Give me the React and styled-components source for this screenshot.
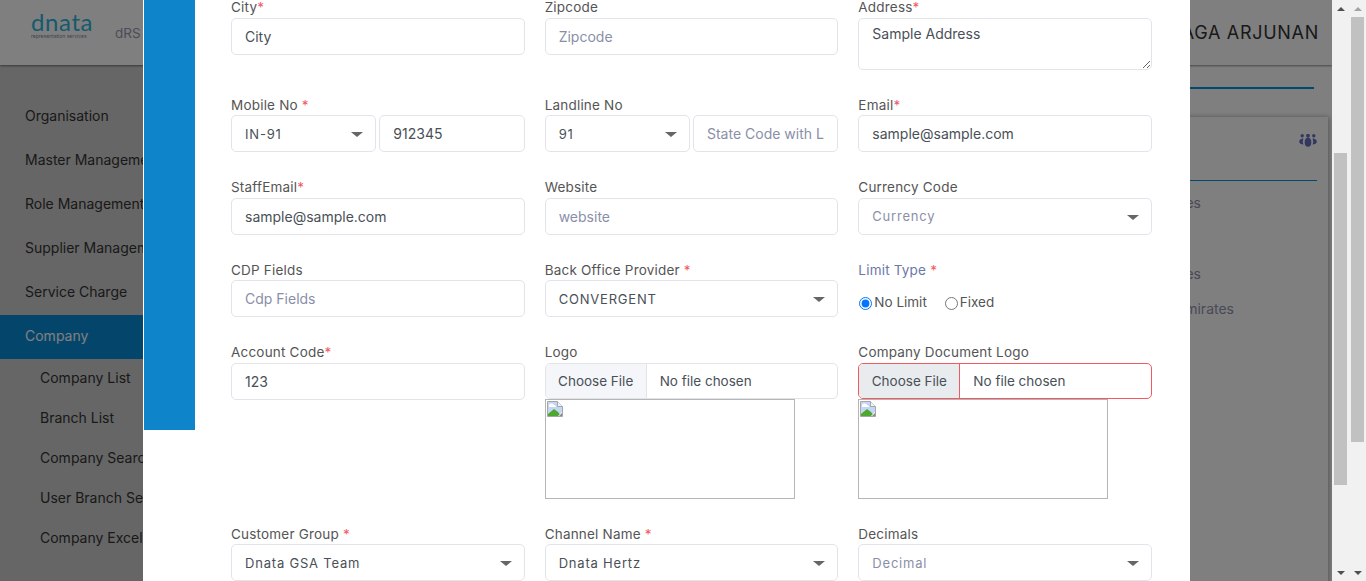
import React from "react"
import styled, { createGlobalStyle } from "styled-components"

const FONT = "Inter, 'Noto Sans', sans-serif"

const GlobalStyle = createGlobalStyle`
    html, body {
        margin: 0;
        height: 100%;
        overflow: hidden;
        font-family: ${FONT};
    }
    * {
        box-sizing: border-box;
    }
`

const sideItems = ["Organisation", "Master Management", "Role Management", "Supplier Management", "Service Charge"]
const subItems = ["Company List", "Branch List", "Company Search", "User Branch Search", "Company Excel Upload"]

function SelectField({ value, muted }) {
    return (
        <SelectWrap>
            <Select defaultValue={value} $muted={muted}>
                <option>{value}</option>
            </Select>
            <CaretMark />
        </SelectWrap>
    )
}

function BrokenImage() {
    return (
        <svg width="16" height="16" viewBox="0 0 16 16">
            <path d="M.5.5h10l5 5v10h-15z" fill="#c3d6f5" stroke="#a6a6a6" />
            <path d="M2 4c1-2 4-2 5 0 1 0 2 1 2 2H2z" fill="#fff" />
            <path d="M1 15v-2l6-5 4 3 3 4z" fill="#4ea72e" />
            <path d="M10.500.5v5h5" fill="#f4f4f4" stroke="#a6a6a6" />
            <path d="M11 15l4-4v4z" fill="#fff" />
            <path d="M12 15l3-3v3z" fill="#8a8a8a" />
        </svg>
    )
}

function TeamIcon() {
    return (
        <svg width="18" height="13" viewBox="0 0 18 13" fill="#666ec0">
            <circle cx="3.200" cy="1.800" r="1.700" />
            <circle cx="9" cy="1.800" r="1.900" />
            <circle cx="14.800" cy="1.800" r="1.700" />
            <ellipse cx="9" cy="8.300" rx="3.300" ry="4.500" />
            <path d="M4.600 4.500C2 4.300.2 5.800.2 7.500s1.800 3 4.200 3c-.8-2-.8-4 .2-6z" />
            <path d="M13.400 4.500c2.600-.2 4.400 1.300 4.400 3s-1.800 3-4.200 3c.8-2 .8-4-.2-6z" />
        </svg>
    )
}

function FileField({ error }) {
    return (
        <>
            <FileInput type="file" $error={error} />
            <Preview>
                <BrokenImage />
            </Preview>
        </>
    )
}

function Field({ label, star, tinted, children }) {
    return (
        <FieldBox>
            <Label $tinted={tinted}>
                {label}
                {star && <Star>{star}</Star>}
            </Label>
            {children}
        </FieldBox>
    )
}

export default function App() {
    return (
        <Screen>
            <GlobalStyle />
            <Page>
                <Header>
                    <Logo>
                        <LogoName>dnata</LogoName>
                        <LogoSub>representation services</LogoSub>
                    </Logo>
                    <AppName>dRS</AppName>
                    <UserName>NAGA ARJUNAN</UserName>
                </Header>
                <Body>
                    <Sidebar>
                        {sideItems.map((item) => <SideItem key={item}>{item}</SideItem>)}
                        <SideItem $active>Company</SideItem>
                        {subItems.map((item) => <SubItem key={item}>{item}</SubItem>)}
                    </Sidebar>
                    <Main>
                        <TopRule />
                        <Card>
                            <CardHead>
                                <TeamIcon />
                            </CardHead>
                            <CardRule />
                            <CardText $top={12} $end={127}>Company Branches</CardText>
                            <CardText $top={51} $end={127}>Company Branches</CardText>
                            <CardText $top={15} $end={94}>United Arab Emirates</CardText>
                        </Card>
                    </Main>
                </Body>
                <Backdrop />
                <Modal>
                    <BlueStrip />
                    <Form>
                        <Field label="City" star="*"><Input defaultValue="City" /></Field>
                        <Field label="Zipcode"><Input placeholder="Zipcode" /></Field>
                        <Field label="Address" star="*"><TextArea defaultValue="Sample Address" /></Field>

                        <Field label="Mobile No" star=" *">
                            <Pair>
                                <SelectField value="IN-91" />
                                <Input defaultValue="912345" />
                            </Pair>
                        </Field>
                        <Field label="Landline No">
                            <Pair>
                                <SelectField value="91" />
                                <Input placeholder="State Code with Lc" />
                            </Pair>
                        </Field>
                        <Field label="Email" star="*"><Input defaultValue="sample@sample.com" /></Field>

                        <Field label="StaffEmail" star="*"><Input defaultValue="sample@sample.com" /></Field>
                        <Field label="Website"><Input placeholder="website" /></Field>
                        <Field label="Currency Code"><SelectField value="Currency" muted /></Field>

                        <Field label="CDP Fields"><Input placeholder="Cdp Fields" /></Field>
                        <Field label="Back Office Provider" star=" *"><SelectField value="CONVERGENT" /></Field>
                        <Field label="Limit Type" star=" *" tinted>
                            <RadioRow>
                                <RadioLabel><input type="radio" name="limit" defaultChecked />No Limit</RadioLabel>
                                <RadioLabel><input type="radio" name="limit" />Fixed</RadioLabel>
                            </RadioRow>
                        </Field>

                        <Field label="Account Code" star="*"><Input defaultValue="123" /></Field>
                        <Field label="Logo"><FileField /></Field>
                        <Field label="Company Document Logo"><FileField error /></Field>

                        <Field label="Customer Group" star=" *"><SelectField value="Dnata GSA Team" /></Field>
                        <Field label="Channel Name" star=" *"><SelectField value="Dnata Hertz" /></Field>
                        <Field label="Decimals"><SelectField value="Decimal" muted /></Field>
                    </Form>
                </Modal>
            </Page>
            <ScrollTrack>
                <Arrow />
                <Thumb $top={136} $height={332} />
                <Arrow $down />
            </ScrollTrack>
            <ScrollTrack>
                <Arrow $disabled />
                <Thumb $top={0} $height={425} />
                <Arrow $down />
            </ScrollTrack>
        </Screen>
    )
}

const Screen = styled.div`
    display: flex;
    width: 1366px;
    height: 581px;
    overflow: hidden;
`
const Page = styled.div`
    position: relative;
    width: 1332px;
    height: 581px;
    overflow: hidden;
    display: flex;
    flex-direction: column;
    background-color: #fff;
`
const Header = styled.header`
    height: 65px;
    flex-shrink: 0;
    display: flex;
    align-items: center;
    padding: 0 13px 0 31px;
    background-color: #fff;
    box-shadow: 0 1px 2px rgba(0, 0, 0, 0.45);
    position: relative;
`
const Logo = styled.div`
    display: flex;
    flex-direction: column;
    width: 58px;
    margin-bottom: 13px;
`
const LogoName = styled.span`
    font-family: 'Lato', sans-serif;
    font-size: 24px;
    line-height: 18px;
    letter-spacing: 0.6px;
    color: #2cb4dd;
`
const LogoSub = styled.span`
    margin-top: 2px;
    font-size: 5px;
    line-height: 6px;
    white-space: nowrap;
    color: #7a8aa0;
`
const AppName = styled.span`
    margin-left: 26px;
    font-size: 13.5px;
    color: #9a9ab4;
`
const UserName = styled.span`
    margin-left: auto;
    font-size: 18px;
    letter-spacing: 0.7px;
    color: #333;
`
const Body = styled.div`
    flex: 1;
    display: flex;
    min-height: 0;
`
const Sidebar = styled.nav`
    width: 220px;
    flex-shrink: 0;
    padding-top: 30px;
    background-color: #ccc;
`
const SideItem = styled.div`
    height: 44px;
    display: flex;
    align-items: center;
    padding: 0 0 3px 25px;
    font-size: 14px;
    white-space: nowrap;
    color: ${(props) => (props.$active ? "#fff" : "#333")};
    background-color: ${(props) => (props.$active ? "#098cd6" : "transparent")};
`
const SubItem = styled.div`
    height: 40px;
    display: flex;
    align-items: center;
    padding: 0 0 3px 40px;
    font-size: 14px;
    white-space: nowrap;
    color: #333;
`
const Main = styled.main`
    flex: 1;
    padding: 22px 4px 0 20px;
`
const TopRule = styled.div`
    height: 2px;
    margin-right: 14px;
    background-color: #0094e0;
`
const Card = styled.section`
    height: 600px;
    margin-top: 28px;
    padding: 0 11px;
    box-shadow: 1px 0 5px rgba(0, 0, 0, 0.35);
`
const CardHead = styled.div`
    height: 63px;
    padding-top: 17px;
    display: flex;
    justify-content: flex-end;
`
const CardRule = styled.div`
    height: 1px;
    background-color: #0094e0;
`
const CardText = styled.div`
    margin-top: ${(props) => props.$top}px;
    padding-right: ${(props) => props.$end - 11}px;
    line-height: 20px;
    text-align: right;
    font-size: 14px;
    color: #9393b0;
`
const Backdrop = styled.div`
    position: absolute;
    inset: 0;
    background-color: rgba(0, 0, 0, 0.5);
`
const Modal = styled.div`
    position: absolute;
    top: 0;
    left: 143px;
    width: 1047px;
    height: 581px;
    display: flex;
    align-items: flex-start;
    padding-left: 1px;
    background-color: #fff;
`
const BlueStrip = styled.div`
    width: 51px;
    height: 430px;
    flex-shrink: 0;
    background-color: #0e84ca;
`
const Form = styled.form`
    flex: 1;
    margin-top: -1.6px;
    padding: 0 38px 0 36px;
    display: grid;
    grid-template-columns: repeat(3, minmax(0, 1fr));
    column-gap: 20px;
`
const FieldBox = styled.div`
    padding-bottom: 26px;
`
const Label = styled.label`
    display: block;
    height: 19.5px;
    line-height: 19px;
    font-size: 13.5px;
    letter-spacing: 0.2px;
    white-space: pre;
    color: ${(props) => (props.$tinted ? "#6c78a8" : "#555")};
`
const Star = styled.span`
    color: #f25961;
`
const controlStyle = `
    width: 100%;
    height: 37px;
    padding: 0 13px;
    border: 1px solid #e3e4ea;
    border-radius: 5px;
    outline: none;
    background-color: #fff;
    font-family: ${FONT};
    font-size: 14px;
    color: #495057;
`
const Input = styled.input`
    ${controlStyle}
    min-width: 0;
    &::placeholder {
        color: #8a8fa8;
        opacity: 1;
    }
`
const TextArea = styled.textarea`
    ${controlStyle}
    display: block;
    height: 52px;
    padding-top: 6px;
`
const Pair = styled.div`
    display: grid;
    grid-template-columns: 1fr 1fr;
    gap: 3px;
`
const SelectWrap = styled.div`
    position: relative;
`
const Select = styled.select`
    ${controlStyle}
    appearance: none;
    font-size: 13px;
    letter-spacing: 0.8px;
    color: ${(props) => (props.$muted ? "#8a8fa8" : "#495057")};
`
const CaretMark = styled.span`
    position: absolute;
    top: 17px;
    right: 13px;
    border-style: solid;
    border-width: 5px 6px 0;
    border-color: #666 transparent transparent;
    pointer-events: none;
`
const RadioRow = styled.div`
    display: flex;
    gap: 17px;
    height: 37px;
    padding-top: 7px;
    align-items: center;
`
const RadioLabel = styled.label`
    display: flex;
    align-items: center;
    font-size: 13.5px;
    color: #555;
    input {
        margin: 3px 2px 0 1px;
    }
`
const FileInput = styled.input`
    display: block;
    width: 100%;
    height: 36px;
    border: 1px solid ${(props) => (props.$error ? "#f25961" : "#e3e4ea")};
    border-radius: 5px;
    overflow: hidden;
    font-family: ${FONT};
    font-size: 13.5px;
    color: #495057;
    &::file-selector-button {
        height: 34px;
        width: 101px;
        margin: 0 13px 0 0;
        padding: 0;
        border: none;
        border-right: 1px solid ${(props) => (props.$error ? "#f25961" : "#e3e4ea")};
        background-color: ${(props) => (props.$error ? "#e9ecef" : "#f5f6f9")};
        font-family: ${FONT};
        font-size: 13.5px;
        color: #495057;
    }
`
const Preview = styled.div`
    width: 250px;
    height: 100px;
    padding: 1px;
    border: 1px solid #b5b5b5;
    line-height: 0;
`
const ScrollTrack = styled.div`
    width: 17px;
    height: 581px;
    flex-shrink: 0;
    display: flex;
    flex-direction: column;
    background-color: #f1f1f1;
`
const Arrow = styled.div`
    height: 17px;
    flex-shrink: 0;
    display: flex;
    align-items: center;
    justify-content: center;
    &::before {
        content: "";
        border-style: solid;
        border-color: transparent;
        border-width: ${(props) => (props.$down ? "4px 4px 0" : "0 4px 4px")};
        border-top-color: ${(props) => (props.$down ? "#505050" : "transparent")};
        border-bottom-color: ${(props) => (props.$disabled ? "#a3a3a3" : props.$down ? "transparent" : "#505050")};
    }
`
const Thumb = styled.div`
    width: 13px;
    margin: ${(props) => props.$top}px auto auto;
    height: ${(props) => props.$height}px;
    background-color: #c1c1c1;
`
